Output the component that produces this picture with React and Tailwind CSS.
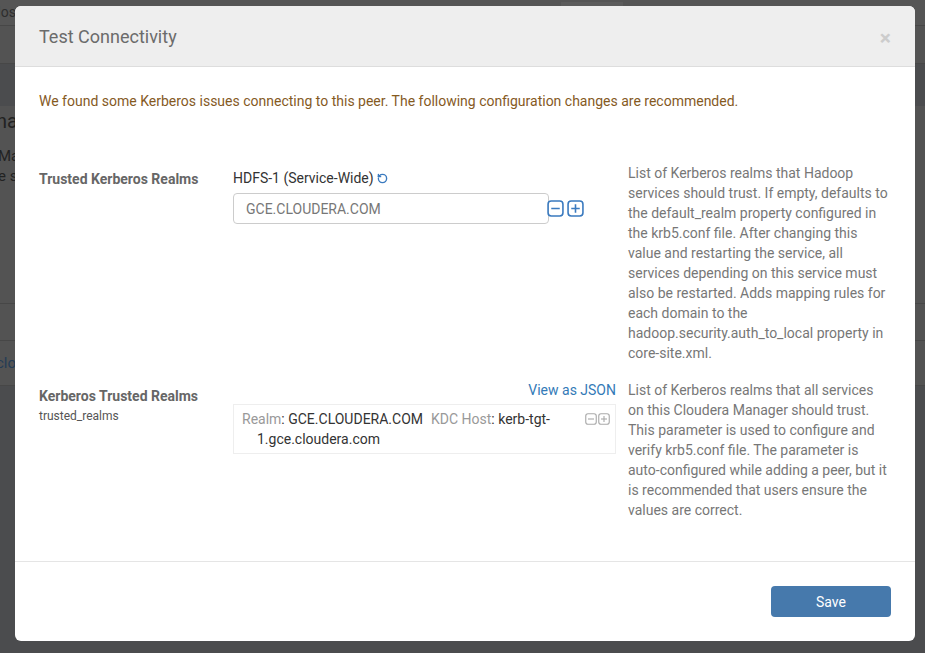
import { RotateCcw } from "lucide-react";

const font = { fontFamily: "Roboto, 'Liberation Sans', sans-serif" };

const SquareIcon = ({ plus, color, size = 17 }) => (
  <svg width={size} height={size} viewBox="0 0 16 16" fill="none">
    <rect x="1" y="1" width="14" height="14" rx="3" stroke={color} strokeWidth="1.5" />
    <line x1="4" y1="8" x2="12" y2="8" stroke={color} strokeWidth="1.5" />
    {plus && <line x1="8" y1="4" x2="8" y2="12" stroke={color} strokeWidth="1.5" />}
  </svg>
);

const Backdrop = () => (
  <div className="w-[925px] h-[653px] bg-[#4b4c4e] overflow-hidden">
    <div className="h-[26px] bg-[#555555] border-b border-[#474747] flex items-center text-[14px] text-[#2e2e2e] whitespace-nowrap">
      <span className="-ml-[10px]">clos</span>
      <span className="ml-[105px]">Diagnostics</span>
      <span className="ml-[40px]">Audits</span>
      <span className="ml-[140px]">Charts</span>
      <span className="ml-[105px] bg-[#5c5c5c] px-2">Backup</span>
      <span className="ml-[40px]">Administration</span>
    </div>
    <div className="h-[38px] bg-[#535353] border-b border-[#474747]" />
    <div className="h-[198px] bg-[#535353] border-b border-[#474747] text-[#222] whitespace-nowrap">
      <div className="mt-[42px] -ml-[4px] text-[20px]">nage</div>
      <div className="mt-[10px] -ml-[2px] text-[15px] leading-[20px]">Manager</div>
      <div className="-ml-[2px] text-[15px] leading-[20px]">e service</div>
    </div>
    <div className="h-[37px] bg-[#535353] border-b border-[#474747]" />
    <div className="h-[45px] bg-[#535353] border-b border-[#474747] flex items-center text-[15px] text-[#243c56] whitespace-nowrap">
      <span className="-ml-[4px]">cloudera</span>
    </div>
  </div>
);

export default function App() {
  return (
    <div className="relative w-[925px] h-[653px] overflow-hidden" style={font}>
      <Backdrop />
      <div className="absolute left-[15px] top-[6px] w-[900px] h-[635px] bg-white rounded-[6px] overflow-hidden flex flex-col">
        <div className="h-[61px] bg-[#eeeeee] border-b border-[#dddddd] flex items-center justify-between pl-6 pr-6 shrink-0">
          <h2 className="text-[18px] text-[#6b6b6b] font-normal">Test Connectivity</h2>
          <span className="text-[21px] font-bold text-[#cccccc] leading-none mt-[5px]">×</span>
        </div>

        <div className="flex-1 px-6 pt-[24px]">
          <p className="text-[14px] leading-[20px] text-[#855a1f]">
            We found some Kerberos issues connecting to this peer. The following configuration changes are recommended.
          </p>

          <div className="mt-[52px] grid grid-cols-[194px_383px_1fr] gap-x-0">
            <div className="mt-[6px] text-[14px] leading-[20px] font-bold text-[#666666]">
              Trusted Kerberos Realms
            </div>
            <div>
              <div className="mt-[5px] flex items-center text-[14px] leading-[20px] text-[#333333]">
                HDFS-1 (Service-Wide)
                <RotateCcw size={11} strokeWidth={3} className="ml-[3px] text-[#3a7abf]" />
              </div>
              <div className="mt-[5px] flex items-center">
                <div className="w-[316px] h-[31px] border border-[#cccccc] rounded-[4px] pl-[12px] pt-[1px] flex items-center text-[14px] text-[#777777]">
                  GCE.CLOUDERA.COM
                </div>
                <div className="flex items-center gap-[3px] -ml-[2px]">
                  <SquareIcon color="#3a7abf" />
                  <SquareIcon plus color="#3a7abf" />
                </div>
              </div>
            </div>
            <p className="ml-3 text-[14px] leading-[20px] text-[#777777]">
              List of Kerberos realms that Hadoop services should trust. If empty, defaults to the default_realm property configured in the krb5.conf file. After changing this value and restarting the service, all services depending on this service must also be restarted. Adds mapping rules for each domain to the hadoop.security.auth_to_local property in core-site.xml.
            </p>
          </div>

          <div className="mt-[17px] grid grid-cols-[194px_383px_1fr] gap-x-0">
            <div className="mt-[6px]">
              <div className="text-[14px] leading-[20px] font-bold text-[#666666]">Kerberos Trusted Realms</div>
              <div className="text-[12px] leading-[20px] text-[#555555]">trusted_realms</div>
            </div>
            <div>
              <div className="text-right text-[14px] leading-[20px] text-[#337ab7]">View as JSON</div>
              <div className="mt-[4px] border border-[#eeeeee] flex items-start pt-[4px] pb-[4px] pr-[5px]">
                <div className="flex-1 pl-[23px] -indent-[15px] text-[14px] leading-[20px] text-[#333333]">
                  <span className="text-[#999999]">Realm</span>: GCE.CLOUDERA.COM
                  <span className="ml-[8px] text-[#999999]">KDC Host</span>: kerb-tgt-1.gce.cloudera.com
                </div>
                <div className="flex items-center gap-[1px] mt-[4px] ml-6">
                  <SquareIcon color="#aaaaaa" size={12} />
                  <SquareIcon plus color="#aaaaaa" size={12} />
                </div>
              </div>
            </div>
            <p className="ml-3 text-[14px] leading-[20px] text-[#777777]">
              List of Kerberos realms that all services on this Cloudera Manager should trust. This parameter is used to configure and verify krb5.conf file. The parameter is auto-configured while adding a peer, but it is recommended that users ensure the values are correct.
            </p>
          </div>
        </div>

        <div className="h-[80px] border-t border-[#e5e5e5] flex justify-end items-start pt-[24px] pr-6 shrink-0">
          <button className="w-[120px] h-[31px] rounded-[4px] bg-[#4679ac] text-white text-[14px] pt-[1px]">
            Save
          </button>
        </div>
      </div>
    </div>
  );
}
